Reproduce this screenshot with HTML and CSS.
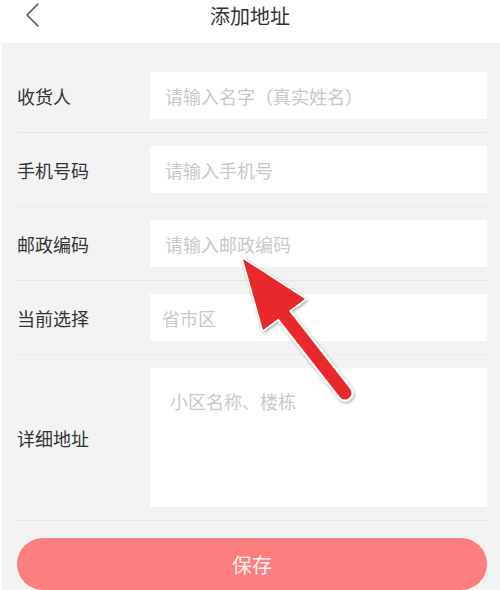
FILE: index.html
```html
<!DOCTYPE html>
<html lang="zh">
<head>
<meta charset="utf-8">
<title>添加地址</title>
<link rel="stylesheet" href="styles.css">
</head>
<body>
<div class="page">
  <header class="topbar">
    <svg class="back" width="20" height="30" viewBox="0 0 20 30"><path d="M13 4 L2 15 L13 26" fill="none" stroke="#555" stroke-width="1.6" stroke-linecap="round" stroke-linejoin="round"/></svg>
    <h1 class="title">添加地址</h1>
  </header>
  <main class="form">
    <div class="row">
      <span class="label">收货人</span>
      <div class="field"><span class="ph">请输入名字（真实姓名）</span></div>
    </div>
    <div class="row row-faint">
      <span class="label">手机号码</span>
      <div class="field"><span class="ph">请输入手机号</span></div>
    </div>
    <div class="row">
      <span class="label">邮政编码</span>
      <div class="field"><span class="ph">请输入邮政编码</span></div>
    </div>
    <div class="row row-faint">
      <span class="label">当前选择</span>
      <div class="field field-select"><span class="ph">省市区</span></div>
    </div>
    <div class="row">
      <span class="label">详细地址</span>
      <div class="field field-area"><span class="ph">小区名称、楼栋</span></div>
    </div>
    <button class="save">保存</button>
  </main>
  <svg class="arrow" width="500" height="590" viewBox="0 0 500 590">
    <defs>
      <filter id="sh" x="-20%" y="-20%" width="140%" height="140%">
        <feDropShadow dx="1" dy="1.5" stdDeviation="1.5" flood-color="#000" flood-opacity="0.35"/>
      </filter>
    </defs>
    <g filter="url(#sh)">
      <line x1="280" y1="310" x2="345" y2="393" stroke="#fff" stroke-width="17" stroke-linecap="round"/>
      <polygon points="243,259 305,299 263,330" fill="#fff" stroke="#fff" stroke-width="3" stroke-linejoin="round"/>
    </g>
    <line x1="280" y1="310" x2="345" y2="393" stroke="#e8282b" stroke-width="13" stroke-linecap="round"/>
    <polygon points="243,259 305,299 263,330" fill="#e8282b"/>
  </svg>
</div>
</body>
</html>
```
FILE: styles.css
```css
html, body {
  margin: 0;
  padding: 0;
  background: #ffffff;
}
body {
  font-family: "Noto Sans CJK SC", "Noto Sans", sans-serif;
  width: 500px;
  height: 590px;
  overflow: hidden;
}
.page {
  position: relative;
  width: 500px;
  height: 590px;
}
.topbar {
  height: 43px;
  background: #fff;
  display: flex;
  align-items: flex-start;
  justify-content: center;
  position: relative;
}
.back {
  position: absolute;
  left: 25px;
  top: 0;
}
.title {
  margin: 0;
  padding-top: 2px;
  font-size: 20px;
  line-height: 28px;
  font-weight: 400;
  color: #333;
}
.form {
  background: #f3f3f3;
  margin-left: 2px;
  padding: 16px 0 0;
  height: 531px;
  display: flex;
  flex-direction: column;
}
.row {
  display: flex;
  align-items: center;
  margin: 0 13px 0 15px;
  padding: 13px 0;
  border-bottom: 1px solid #e5e5e5;
}
.row-faint {
  border-bottom-color: #ececec;
}
.label {
  width: 133px;
  flex: none;
  font-size: 18px;
  color: #333;
}
.field {
  flex: 1;
  height: 47px;
  background: #fff;
  display: flex;
  align-items: center;
  padding-left: 15px;
}
.field-select {
  padding-left: 12px;
}
.field-area {
  height: 139px;
  align-items: flex-start;
  padding-left: 20px;
  padding-top: 22px;
  box-sizing: border-box;
}
.ph {
  font-size: 18px;
  color: #c9c9c9;
  line-height: 22px;
}
.save {
  margin: 17px 13px 0 15px;
  height: 53px;
  border: none;
  border-radius: 27px;
  background: #fd7e7f;
  color: #fff2f2;
  font-family: "Noto Sans CJK SC", "Noto Sans", sans-serif;
  font-size: 20px;
  padding: 0;
}
.arrow {
  position: absolute;
  left: 0;
  top: 0;
  pointer-events: none;
}
```
